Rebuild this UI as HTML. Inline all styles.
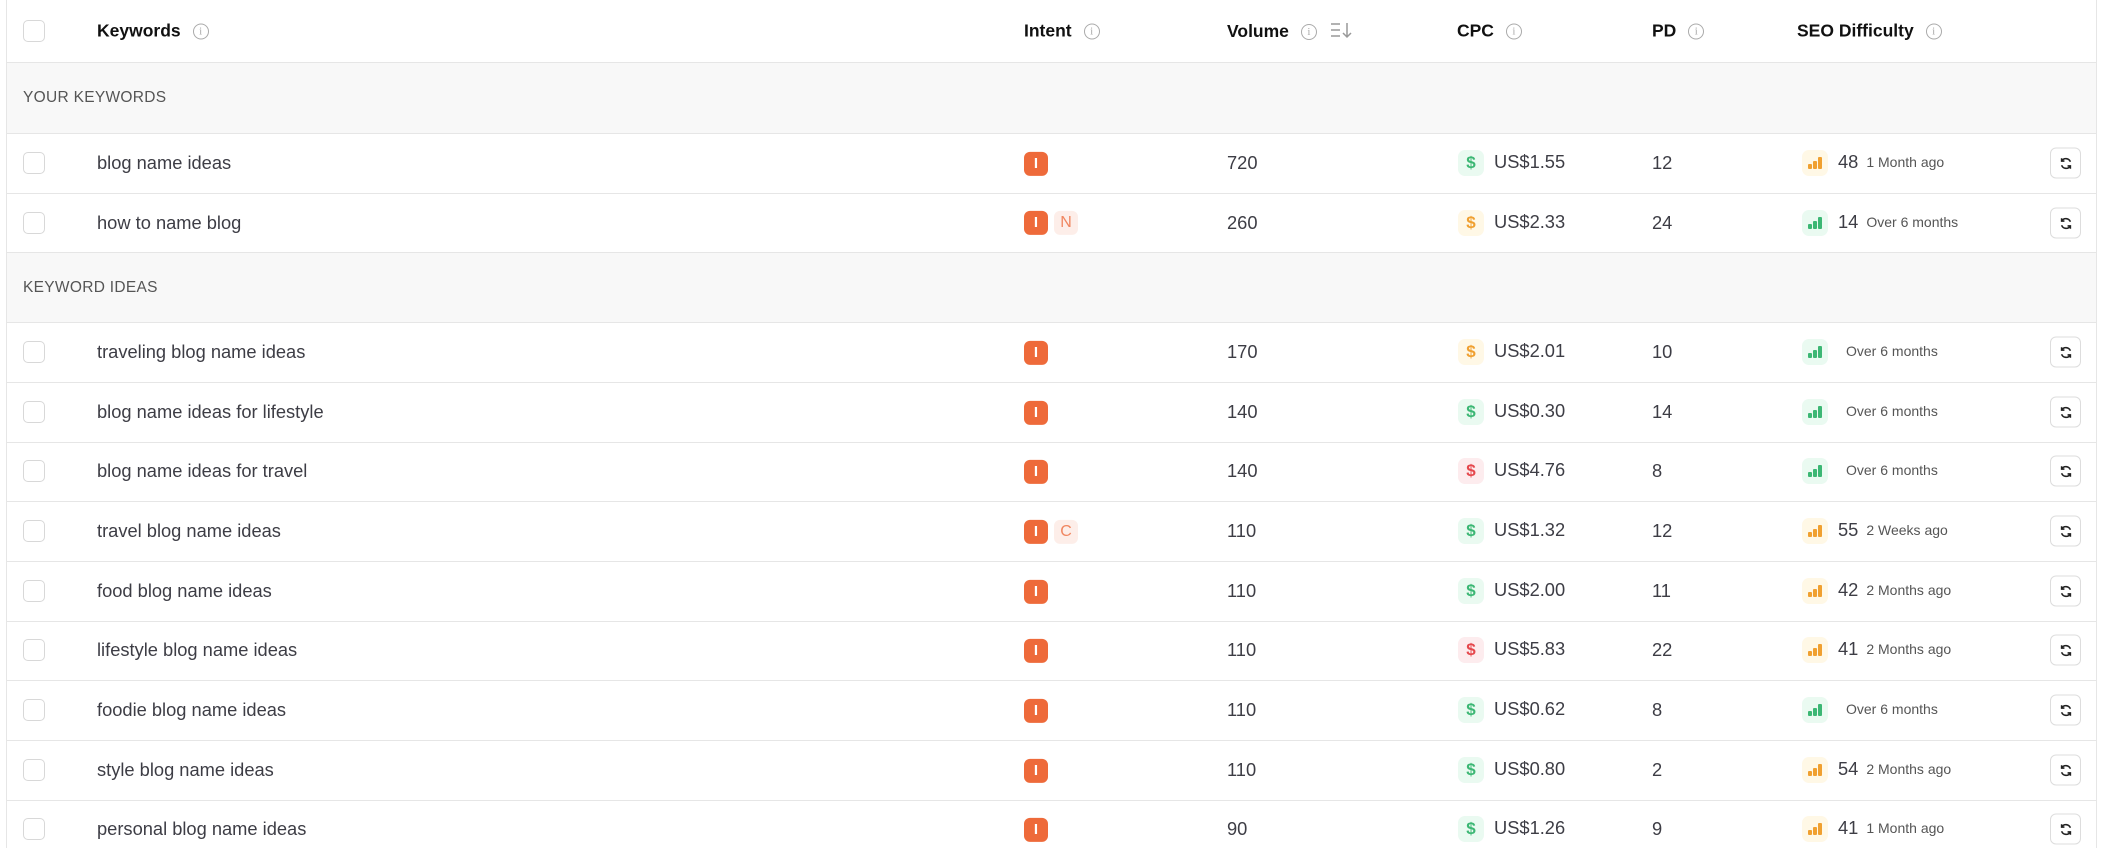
<!DOCTYPE html><html><head><style>
*{box-sizing:border-box;margin:0;padding:0}
html,body{width:2110px;height:848px;overflow:hidden}
body{background:#fff;font-family:"Liberation Sans",Arial,sans-serif;color:#3d3d45;position:relative}
.card{position:absolute;left:6px;top:-12px;width:2091px;height:880px;border:1.5px solid #e6e6e6;border-radius:12px}
.row{position:absolute;left:7px;width:2089px;border-bottom:1.5px solid #e6e6e6}
.cell{position:absolute;top:50%;transform:translateY(-50%);font-size:18.3px;white-space:nowrap}
.cb{position:absolute;left:16px;top:50%;transform:translateY(-50%);width:22px;height:22px;border:1.5px solid #d8d8d8;border-radius:5px;background:#fff}
.hdr{font-weight:bold;color:#111;font-size:17.5px}
.info{display:inline-block;width:16px;height:16px;border:1.3px solid #aaa;border-radius:50%;font-size:11px;color:#aaa;text-align:center;line-height:14px;font-weight:normal;vertical-align:2px;margin-left:12px;font-family:"Liberation Serif",serif}
.sec{background:#f8f8f8}
.sec span{position:absolute;left:16px;top:50%;transform:translateY(-50%);font-size:15.5px;color:#555;letter-spacing:.3px}
.bi{display:inline-block;width:24px;height:24px;border-radius:6px;background:#ee6a3a;color:#fff;font-size:15px;text-align:center;line-height:24px;vertical-align:middle;font-weight:bold}
.bn{display:inline-block;width:24px;height:24px;border-radius:6px;background:#fdeee9;color:#f08660;font-size:16px;text-align:center;line-height:24px;vertical-align:middle;margin-left:6px}
.dl{display:inline-block;width:26px;height:26px;border-radius:7px;text-align:center;line-height:26px;font-weight:bold;font-size:17px;vertical-align:middle;margin-right:10px}
.g{background:#eafaf1;color:#3cb774}.o{background:#fff8e6;color:#f0a030}.r{background:#fdecee;color:#e5484d}
.bar{display:inline-block;width:26px;height:26px;border-radius:7px;vertical-align:middle;margin-right:10px;position:relative}
.bar i{position:absolute;bottom:7px;width:4px;border-radius:1px}
.bar.o i{background:#f0a030}.bar.g i{background:#3cb774}
.age{font-size:14px;color:#555;margin-left:8px;vertical-align:1px}
.rf{position:absolute;left:2043px;top:50%;transform:translateY(-50%);width:31px;height:31px;border:1.5px solid #ddd;border-radius:6px;display:flex;align-items:center;justify-content:center}
</style></head><body>
<div class="card"></div>
<div class="row" style="top:0;height:63px">
<div class="cb"></div>
<div class="cell hdr" style="left:90px">Keywords<span class="info">i</span></div>
<div class="cell hdr" style="left:1017px">Intent<span class="info">i</span></div>
<div class="cell hdr" style="left:1220px">Volume<span class="info">i</span><svg width="24" height="20" viewBox="0 0 24 20" style="margin-left:12px;vertical-align:-3px"><g stroke="#999" stroke-width="1.5" fill="none"><path d="M2 4h9M2 10h9M2 16h9M18 3v14M14 13l4 4 4-4"/></g></svg></div>
<div class="cell hdr" style="left:1450px">CPC<span class="info">i</span></div>
<div class="cell hdr" style="left:1645px">PD<span class="info">i</span></div>
<div class="cell hdr" style="left:1790px">SEO Difficulty<span class="info">i</span></div>
</div>
<div class="row sec" style="top:63px;height:71px"><span>YOUR KEYWORDS</span></div>
<div id="r"></div>
<script>
const rows=[
[134,'blog name ideas',0,'720','g','US$1.55','12','o','48','1 Month ago'],
[194,'how to name blog','N','260','o','US$2.33','24','g','14','Over 6 months'],
null,
[323,'traveling blog name ideas',0,'170','o','US$2.01','10','g','','Over 6 months'],
[383,'blog name ideas for lifestyle',0,'140','g','US$0.30','14','g','','Over 6 months'],
[442,'blog name ideas for travel',0,'140','r','US$4.76','8','g','','Over 6 months'],
[502,'travel blog name ideas','C','110','g','US$1.32','12','o','55','2 Weeks ago'],
[562,'food blog name ideas',0,'110','g','US$2.00','11','o','42','2 Months ago'],
[621,'lifestyle blog name ideas',0,'110','r','US$5.83','22','o','41','2 Months ago'],
[681,'foodie blog name ideas',0,'110','g','US$0.62','8','g','','Over 6 months'],
[741,'style blog name ideas',0,'110','g','US$0.80','2','o','54','2 Months ago'],
[800,'personal blog name ideas',0,'90','g','US$1.26','9','o','41','1 Month ago']];
let h='';
const rf='<div class="rf"><svg width="14" height="14" viewBox="0 0 16 16"><g fill="none" stroke="#222" stroke-width="1.8"><path d="M13 6A5.5 5.5 0 0 0 3.2 5M3 10a5.5 5.5 0 0 0 9.8 1"/><path d="M3 2v3.2h3.2M13 14v-3.2H9.8"/></g></svg></div>';
rows.forEach((r,i)=>{
if(!r){h+='<div class="row sec" style="top:253px;height:70px"><span>KEYWORD IDEAS</span></div>';return;}
const ht=(i==1?59:59.7);
h+=`<div class="row" style="top:${r[0]}px;height:${ht}px"><div class="cb"></div>
<div class="cell" style="left:90px">${r[1]}</div>
<div class="cell" style="left:1017px"><span class="bi">I</span>${r[2]?`<span class="bn">${r[2]}</span>`:''}</div>
<div class="cell" style="left:1220px">${r[3]}</div>
<div class="cell" style="left:1451px"><span class="dl ${r[4]}">$</span>${r[5]}</div>
<div class="cell" style="left:1645px">${r[6]}</div>
<div class="cell" style="left:1795px"><span class="bar ${r[7]}"><i style="left:6px;height:5px"></i><i style="left:11px;height:8px"></i><i style="left:16px;height:12px"></i></span>${r[8]}<span class="age">${r[9]}</span></div>
${rf}</div>`;});
document.getElementById('r').innerHTML=h;
</script>
</body></html>
